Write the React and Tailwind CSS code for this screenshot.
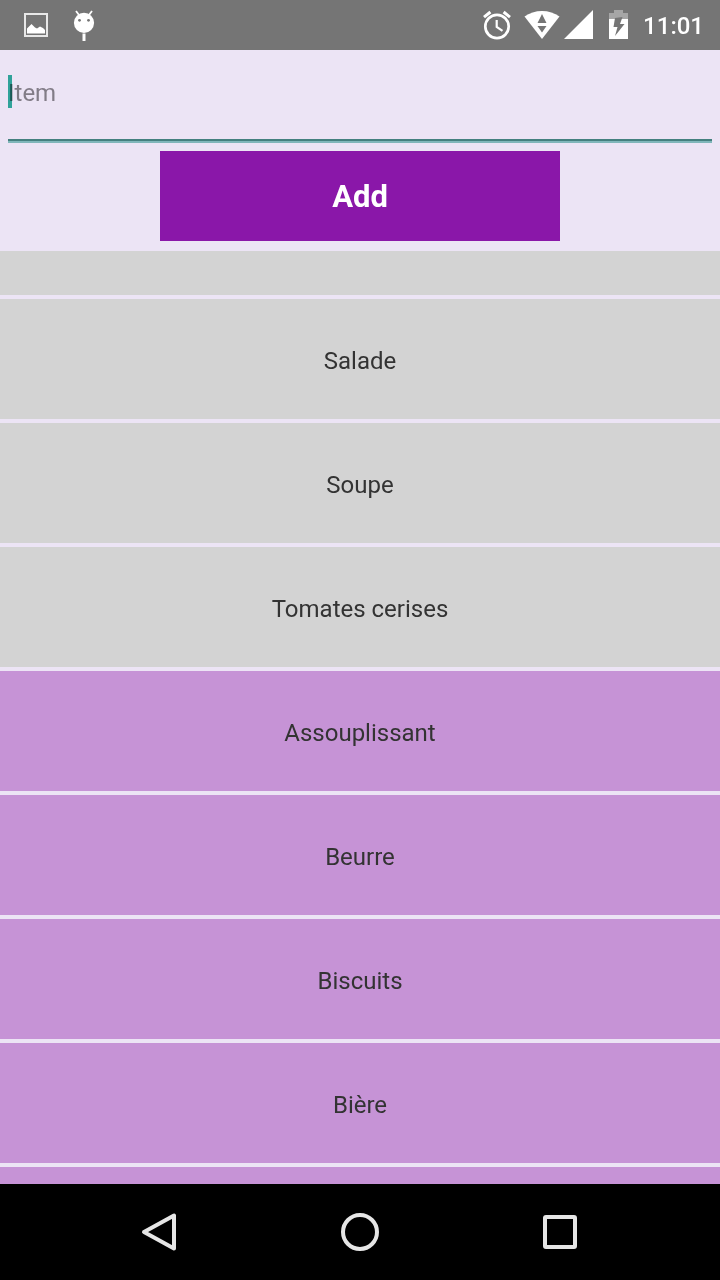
import React, { useState } from 'react';
import { clsx } from 'clsx';

const initialItems = [
  { name: 'Salade', done: true },
  { name: 'Soupe', done: true },
  { name: 'Tomates cerises', done: true },
  { name: 'Assouplissant', done: false },
  { name: 'Beurre', done: false },
  { name: 'Biscuits', done: false },
  { name: 'Bière', done: false },
];

const StatusBar = () => {
  return (
    <header className="flex h-[50px] shrink-0 items-center justify-between bg-[#757575] pl-6 pr-4 text-white">
      <div className="flex items-center gap-6">
        <svg width="24" height="24" viewBox="0 0 24 24" fill="none">
          <rect x="1" y="1" width="22" height="22" stroke="#e8e8e8" strokeWidth="2" />
          <path d="M3 20.5V15.5L7.5 11L11 14.5L13 15.5L16 13.5L19 15L21 17V20.5Z" fill="#fff" />
        </svg>
        <svg width="24" height="32" viewBox="0 0 24 32" fill="none">
          <path d="M4 2L7 6M20 2L17 6" stroke="#fff" strokeWidth="1.8" />
          <circle cx="12" cy="13.8" r="10.1" fill="#fff" />
          <circle cx="7.5" cy="11.3" r="1.4" fill="#757575" />
          <circle cx="16.5" cy="11.3" r="1.4" fill="#757575" />
          <path d="M12 24.5V32" stroke="#fff" strokeWidth="3" />
        </svg>
      </div>

      <div className="flex items-center">
        <svg width="30" height="30" viewBox="0 0 30 30" fill="none" stroke="#fff">
          <circle cx="15" cy="16.5" r="11.7" strokeWidth="2.7" />
          <path d="M14.7 10V17L20.5 20.8" strokeWidth="2.2" />
          <path d="M2 7.2L8.4 2M28 7.2L21.6 2" strokeWidth="3" />
        </svg>
        <svg className="ml-3" width="36" height="30" viewBox="0 0 36 30">
          <path d="M0.5 6.5C10 -1 26 -1 35.5 6.5L18 29Z" fill="#fff" />
          <path d="M18 4L22.5 13H13.5ZM13.5 16H22.5L18 22.5Z" fill="#757575" />
        </svg>
        <svg className="ml-1" width="29" height="30" viewBox="0 0 29 30">
          <path d="M0 29L29 0V29Z" fill="#fff" />
        </svg>
        <svg className="ml-4" width="19" height="30" viewBox="0 0 19 30">
          <path d="M5 0H14V3H19V10H0V3H5Z" fill="#a6a6a6" />
          <path d="M0 9H19V29H0Z" fill="#fff" />
          <path d="M13.5 7L6 8L4.5 17H8.5L6 26L15.5 14H11Z" fill="#757575" />
        </svg>
        <time className="ml-[15px] pt-px text-2xl font-medium">11:01</time>
      </div>
    </header>
  );
};

const NavBar = () => {
  return (
    <nav className="flex h-24 shrink-0 items-center justify-center gap-40 bg-black">
      <button type="button" aria-label="Back">
        <svg width="40" height="40" viewBox="0 0 40 40" fill="none">
          <path d="M4 20L34 3.5V36.5Z" stroke="#e6e6e6" strokeWidth="4" strokeLinejoin="round" />
        </svg>
      </button>
      <button type="button" aria-label="Home">
        <svg width="40" height="40" viewBox="0 0 40 40" fill="none">
          <circle cx="20" cy="20" r="17" stroke="#e6e6e6" strokeWidth="4" />
        </svg>
      </button>
      <button type="button" aria-label="Recent apps">
        <svg width="40" height="40" viewBox="0 0 40 40" fill="none">
          <rect x="5" y="5" width="30" height="30" rx="1" stroke="#e6e6e6" strokeWidth="4" />
        </svg>
      </button>
    </nav>
  );
};

const App = () => {
  const [items, setItems] = useState(initialItems);
  const [text, setText] = useState('');

  const addItem = (e) => {
    e.preventDefault();
    if (!text.trim()) return;
    setItems([...items, { name: text.trim(), done: false }]);
    setText('');
  };

  const toggleItem = (i) => {
    setItems(items.map((item, j) => (j === i ? { ...item, done: !item.done } : item)));
  };

  return (
    <div className="flex h-screen flex-col bg-[#ece4f5] font-[Roboto,sans-serif]">
      <StatusBar />

      <form onSubmit={addItem} className="flex shrink-0 flex-col items-center gap-2 px-2 pb-[10px]">
        <div className="relative w-full border-b-2 border-[#80b6ba]">
          <input
            type="text"
            aria-label="Item"
            placeholder="Item"
            value={text}
            onChange={(e) => setText(e.target.value)}
            className="block w-full border-b-2 border-[#44807f] pt-[27px] pb-[30px] text-2xl text-[#333333] caret-[#2fa598] outline-none placeholder:text-[#827c87]"
          />
          {!text && (
            <span className="absolute left-0 top-[25px] h-[33px] w-1 bg-[#33b5a0] mix-blend-multiply" />
          )}
        </div>
        <button
          type="submit"
          className="h-[90px] w-[400px] max-w-full bg-[#8a17a9] pt-[3px] text-[31px] font-bold text-white"
        >
          Add
        </button>
      </form>

      <ul className="flex min-h-0 flex-1 flex-col gap-1 overflow-hidden">
        <li className="h-11 shrink-0 bg-[#d3d3d3]" />
        {items.map((item, i) => (
          <li key={i} className="shrink-0">
            <button
              type="button"
              onClick={() => toggleItem(i)}
              className={clsx(
                'h-[120px] w-full pt-1 text-2xl text-[#333333]',
                item.done ? 'bg-[#d3d3d3]' : 'bg-[#c693d6]'
              )}
            >
              {item.name}
            </button>
          </li>
        ))}
        <li className="h-[120px] shrink-0 bg-[#c693d6]" />
      </ul>

      <NavBar />
    </div>
  );
};

export default App;
